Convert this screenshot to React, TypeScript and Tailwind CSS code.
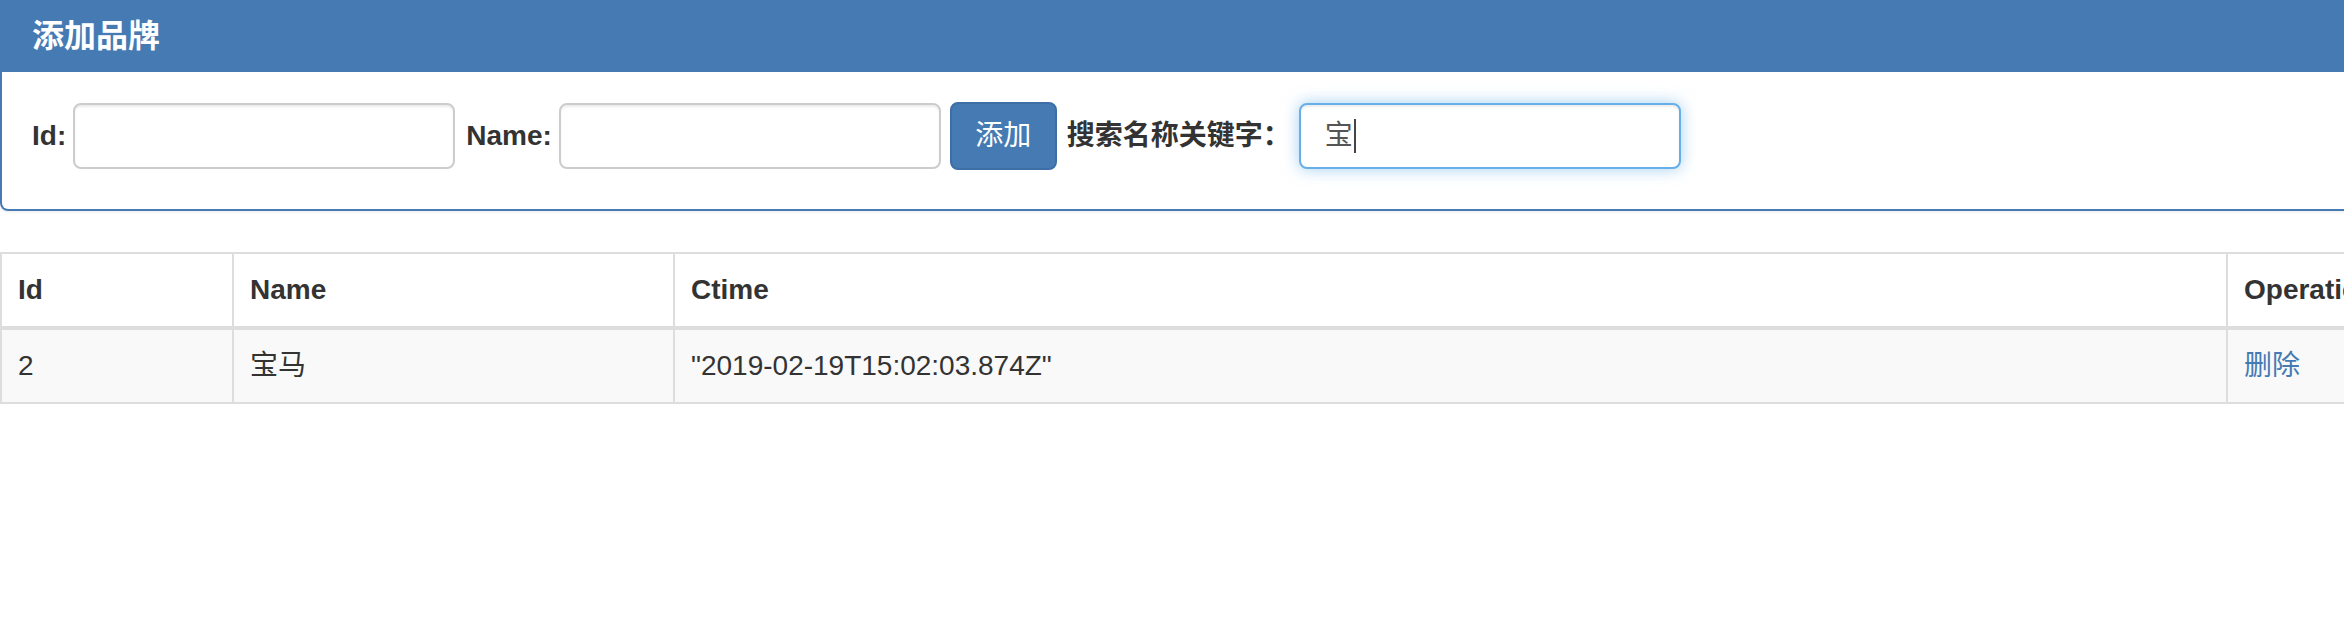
import React from 'react';

const font = "font-['Liberation_Sans','Noto_Sans_CJK_SC',sans-serif]";

const rows = [{ id: 2, name: '宝马', ctime: '"2019-02-19T15:02:03.874Z"' }];

const TextBox = ({ className = '' }: { className?: string }) => (
    <input
        type="text"
        className={`h-[66px] w-[382px] rounded-[8px] border-2 border-[#ccc] bg-white px-[24px] text-[28px] text-[#555] shadow-[inset_0_2px_2px_rgba(0,0,0,0.075)] outline-none ${className}`}
    />
);

export default function App() {
    return (
        <div className={`w-full overflow-hidden bg-white text-[#333] ${font}`}>
            <div className="w-[2600px]">
                {/* Add brand panel */}
                <div className="rounded-b-[8px] border-2 border-t-0 border-[#457ab3] bg-white shadow-[0_2px_2px_rgba(0,0,0,0.05)]">
                    <div className="flex h-[72px] items-center bg-[#457ab3] px-[30px]">
                        <h3 className="text-[32px] font-bold text-white">添加品牌</h3>
                    </div>
                    <div className="flex items-center pl-[30px] pt-[30px] pb-[39px]">
                        <label className="text-[28px] font-bold leading-[40px]">Id:</label>
                        <TextBox className="ml-[7px]" />
                        <label className="ml-[11px] text-[28px] font-bold leading-[40px]">Name:</label>
                        <TextBox className="ml-[7px]" />
                        <button className="ml-[9px] h-[68px] w-[107px] rounded-[8px] border-2 border-[#3d6ea6] bg-[#457ab3] text-[28px] text-white">
                            添加
                        </button>
                        <label className="ml-[10px] text-[28px] font-bold leading-[40px]">搜索名称关键字：</label>
                        {/* focused search box */}
                        <div className="ml-[8px] flex h-[66px] w-[382px] items-center rounded-[8px] border-2 border-[#66afe9] bg-white px-[24px] text-[28px] text-[#555] shadow-[inset_0_2px_2px_rgba(0,0,0,0.075),0_0_16px_rgba(102,175,233,0.6)]">
                            <span>宝</span>
                            <span className="ml-[1px] h-[34px] w-[2px] bg-[#444]" />
                        </div>
                    </div>
                </div>

                {/* Brand list */}
                <div className="mt-[41px] border-2 border-[#ddd] text-[28px] leading-[40px]">
                    <div className="grid grid-cols-[232px_441px_1553px_1fr] border-b-4 border-[#ddd] bg-white font-bold">
                        <div className="border-r-2 border-[#ddd] p-[16px]">Id</div>
                        <div className="border-r-2 border-[#ddd] p-[16px]">Name</div>
                        <div className="border-r-2 border-[#ddd] p-[16px]">Ctime</div>
                        <div className="p-[16px]">Operation</div>
                    </div>
                    {rows.map((row) => (
                        <div key={row.id} className="grid grid-cols-[232px_441px_1553px_1fr] bg-[#f9f9f9]">
                            <div className="border-r-2 border-[#ddd] p-[16px]">{row.id}</div>
                            <div className="border-r-2 border-[#ddd] p-[16px]">{row.name}</div>
                            <div className="border-r-2 border-[#ddd] p-[16px]">{row.ctime}</div>
                            <div className="p-[16px]">
                                <a href="#" className="text-[#457ab3]">删除</a>
                            </div>
                        </div>
                    ))}
                </div>
            </div>
        </div>
    );
}
